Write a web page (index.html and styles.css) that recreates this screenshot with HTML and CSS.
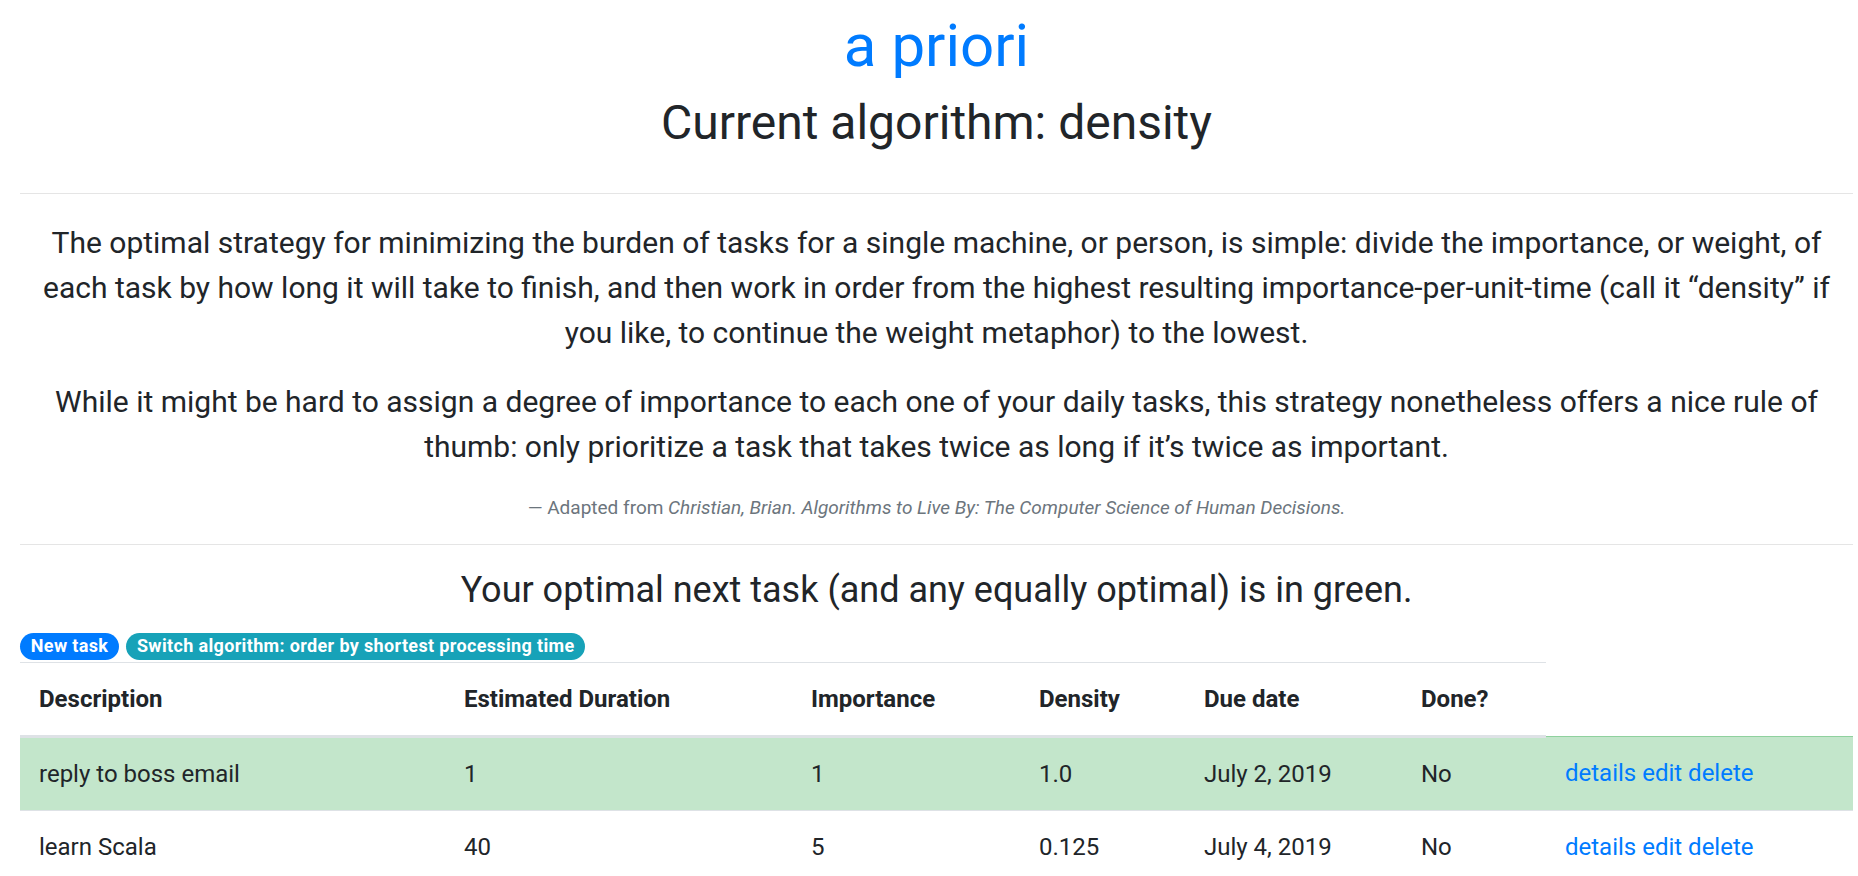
FILE: index.html
```html
<!DOCTYPE html>
<html lang="en">
<head>
<meta charset="utf-8">
<title>a priori</title>
<link rel="stylesheet" href="styles.css">
</head>
<body>
<div class="container">
  <header class="masthead">
    <h1 class="brand"><a href="#">a priori</a></h1>
    <h2 class="algo">Current algorithm: density</h2>
  </header>
  <hr class="rule rule-top">
  <blockquote class="quote">
    <p class="lead">The optimal strategy for minimizing the burden of tasks for a single machine, or person, is simple: divide the importance, or weight, of each task by how long it will take to finish, and then work in order from the highest resulting importance-per-unit-time (call it “density” if you like, to continue the weight metaphor) to the lowest.</p>
    <p class="lead">While it might be hard to assign a degree of importance to each one of your daily tasks, this strategy nonetheless offers a nice rule of thumb: only prioritize a task that takes twice as long if it’s twice as important.</p>
    <footer class="quote-footer">— Adapted from <cite>Christian, Brian. Algorithms to Live By: The Computer Science of Human Decisions.</cite></footer>
  </blockquote>
  <hr class="rule rule-mid">
  <h4 class="hint">Your optimal next task (and any equally optimal) is in green.</h4>
  <div class="actions">
    <a href="#" class="badge badge-primary">New task</a>
    <a href="#" class="badge badge-info">Switch algorithm: order by shortest processing time</a>
  </div>
  <table class="tasks">
    <colgroup>
      <col class="c-desc"><col class="c-dur"><col class="c-imp"><col class="c-den"><col class="c-due"><col class="c-done"><col class="c-act">
    </colgroup>
    <thead>
      <tr>
        <th>Description</th>
        <th>Estimated Duration</th>
        <th>Importance</th>
        <th>Density</th>
        <th>Due date</th>
        <th>Done?</th>
      </tr>
    </thead>
    <tbody>
      <tr class="row-success">
        <td>reply to boss email</td>
        <td>1</td>
        <td>1</td>
        <td>1.0</td>
        <td>July 2, 2019</td>
        <td>No</td>
        <td><a href="#">details</a> <a href="#">edit</a> <a href="#">delete</a></td>
      </tr>
      <tr>
        <td>learn Scala</td>
        <td>40</td>
        <td>5</td>
        <td>0.125</td>
        <td>July 4, 2019</td>
        <td>No</td>
        <td><a href="#">details</a> <a href="#">edit</a> <a href="#">delete</a></td>
      </tr>
    </tbody>
  </table>
</div>
</body>
</html>
```
FILE: styles.css
```css
html, body {
  margin: 0;
  padding: 0;
  background: #fff;
}
body {
  font-family: Roboto, "Noto Sans", Arial, sans-serif;
  font-size: 24px;
  line-height: 1.5;
  color: #212529;
  overflow: hidden;
}
a {
  color: #007bff;
  text-decoration: none;
}
.container {
  margin-left: 20px;
  width: 1833px;
  padding-top: 10px;
}
.masthead {
  text-align: center;
}
.brand {
  margin: 0 0 12px;
  font-size: 60px;
  font-weight: 400;
  line-height: 1.2;
}
.algo {
  margin: 0;
  font-size: 48px;
  font-weight: 400;
  line-height: 1.2;
}
.rule {
  border: 0;
  border-top: 1px solid rgba(0, 0, 0, 0.1);
  height: 0;
}
.rule-top {
  margin: 41px 0 26px;
}
.quote {
  margin: 0;
  text-align: center;
}
.lead {
  margin: 0 0 24px;
  font-size: 30px;
  line-height: 45px;
  font-weight: 400;
}
.quote-footer {
  font-size: 19px;
  line-height: 29px;
  color: #6c757d;
}
.quote-footer cite {
  font-style: italic;
}
.rule-mid {
  margin: 22px 0 24px;
}
.hint {
  margin: 0 0 12px;
  font-size: 36px;
  font-weight: 400;
  line-height: 1.2;
  text-align: center;
}
.actions {
  display: flex;
  gap: 7px;
  padding-top: 9px;
  margin-bottom: 2px;
}
.badge {
  display: inline-block;
  font-size: 18px;
  font-weight: 700;
  line-height: 1;
  letter-spacing: 0.35px;
  padding: 4.5px 10.8px;
  border-radius: 240px;
  color: #fff;
  white-space: nowrap;
}
.badge-primary {
  background: #007bff;
}
.badge-info {
  background: #17a2b8;
}
.tasks {
  width: 1833px;
  table-layout: fixed;
  border-collapse: collapse;
}
.c-desc { width: 425px; }
.c-dur { width: 347px; }
.c-imp { width: 228px; }
.c-den { width: 165px; }
.c-due { width: 217px; }
.c-done { width: 144px; }
.c-act { width: 307px; }
.tasks th,
.tasks td {
  padding: 18px 19px;
  line-height: 36px;
  text-align: left;
  vertical-align: top;
  border-top: 1px solid #dee2e6;
}
.tasks th {
  font-weight: 700;
  vertical-align: bottom;
  border-bottom: 3px solid #dee2e6;
}
.row-success td {
  background: #c3e6cb;
  border-top-color: #8fd19e;
}
```
